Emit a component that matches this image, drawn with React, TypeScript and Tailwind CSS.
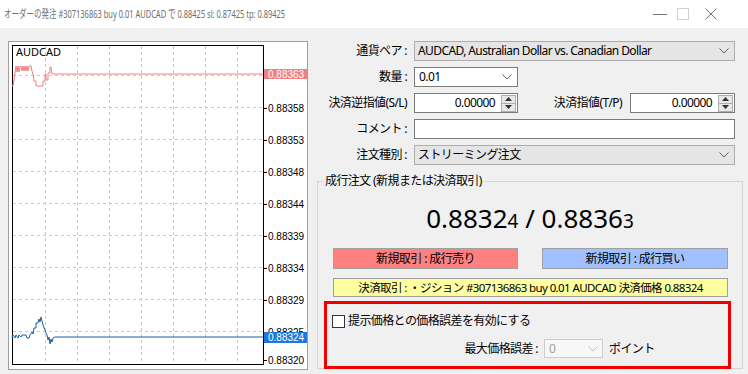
import React from 'react'

const FONT = { fontFamily: '"Noto Sans", "Noto Sans CJK JP", sans-serif' }

function Chevron({ color = '#606060' }: { color?: string }) {
  return (
    <svg width="10" height="6" viewBox="0 0 10 6">
      <polyline points="0.5,0.5 5,5 9.5,0.5" fill="none" stroke={color} strokeWidth="1" />
    </svg>
  )
}

function Spin() {
  return (
    <div className="flex flex-col w-[15px] h-[17px] border border-[#adadad] bg-[#e8e8e8] mr-[1px]">
      <div className="flex-1 flex items-center justify-center border-b border-[#adadad]">
        <svg width="7" height="4" viewBox="0 0 7 4"><polygon points="0,4 3.5,0 7,4" fill="#333" /></svg>
      </div>
      <div className="flex-1 flex items-center justify-center">
        <svg width="7" height="4" viewBox="0 0 7 4"><polygon points="0,0 3.5,4 7,0" fill="#333" /></svg>
      </div>
    </div>
  )
}

function Chart() {
  const vx = [36, 68, 100, 132, 164, 196, 228]
  const hy = [33, 65, 97, 129, 161, 193, 225, 257, 289]
  const ticks: [number, string][] = [
    [66, '0.88358'],
    [98, '0.88353'],
    [130, '0.88348'],
    [162, '0.88344'],
    [194, '0.88339'],
    [226, '0.88334'],
    [258, '0.88329'],
    [290, '0.88325'],
    [318, '0.88320'],
  ]
  const red =
    '3,44 4,44 5,38 6,31 7,24 8,30 9,24 10,30 11,24 12,24 13,29 14,24 15,29 16,24 17,29 18,24 19,29 20,24 22,24 23,29 24,32 25,39 27,39 27,44 34,44 34,39 36,39 36,32 37,32 37,38 39,38 39,31 41,31 41,25 42,25 43,32 254,32'
  const blue =
    '3,296 4,293 6,296 7,293 9,296 10,293 12,295 13,293 15,293 17,293 18,296 20,296 21,293 23,290 24,292 25,286 27,286 27,281 29,281 30,277 31,280 32,275 33,279 34,283 36,288 37,291 38,293 39,298 40,295 41,302 42,297 43,300 44,296 46,295 254,295'
  return (
    <svg width="298" height="327" viewBox="0 0 298 327" className="block">
      {vx.map((x) => (
        <line key={x} x1={x + 0.5} y1={4} x2={x + 0.5} y2={322} stroke="#c8c8c8" strokeDasharray="3,3" />
      ))}
      {hy.map((y) => (
        <line key={y} x1={4} y1={y + 0.5} x2={254} y2={y + 0.5} stroke="#c8c8c8" strokeDasharray="3,3" />
      ))}
      <rect x="3.5" y="3.5" width="251" height="319" fill="none" stroke="#000" />
      <polyline points={red} fill="none" stroke="#f08080" strokeWidth="1" />
      <polyline points={blue} fill="none" stroke="#1c5fa0" strokeWidth="1" />
      {ticks.map(([y, t]) => (
        <g key={t}>
          <line x1="255" y1={y + 0.5} x2="258" y2={y + 0.5} stroke="#000" />
          <text x="259" y={y + 3.5} fontSize="10" fontFamily='"Liberation Sans", sans-serif' fill="#000">
            {t}
          </text>
        </g>
      ))}
      <rect x="255" y="27" width="45" height="10" fill="#f08080" />
      <text x="259" y="35.5" fontSize="10" fontFamily='"Liberation Sans", sans-serif' fill="#fff">
        0.88363
      </text>
      <rect x="255" y="290" width="45" height="11" fill="#1e78dc" />
      <text x="259" y="299" fontSize="10" fontFamily='"Liberation Sans", sans-serif' fill="#fff">
        0.88324
      </text>
      <text x="7" y="14" fontSize="11" fontFamily='"Noto Sans", sans-serif' fill="#000">
        AUDCAD
      </text>
    </svg>
  )
}

function Label({ children }: { children: React.ReactNode }) {
  return <div className="w-[90px] text-right whitespace-nowrap">{children}</div>
}

export default function App() {
  return (
    <div style={FONT} className="w-[748px] h-[374px] bg-[#f0f0f0] flex flex-col text-[12px] tracking-[-0.6px] text-black overflow-hidden">
      {/* title bar */}
      <div className="h-[28px] bg-white flex items-center shrink-0">
        <div className="pl-[6px] w-[440px] text-[11px] tracking-normal text-[#6e6e6e] whitespace-nowrap origin-left scale-x-[0.68]">
          オーダーの発注 #307136863 buy 0.01 AUDCAD で 0.88425 sl: 0.87425 tp: 0.89425
        </div>
        <div className="ml-auto mr-[31px] flex items-center h-full">
          <svg width="14" height="1"><rect width="14" height="1" fill="#777" /></svg>
          <svg width="12" height="12" className="ml-[10px]">
            <rect x="0.5" y="0.5" width="11" height="11" fill="none" stroke="#d0d0d0" />
          </svg>
          <svg width="12" height="12" className="ml-[16px]">
            <path d="M0.5,0.5 L11.5,11.5 M11.5,0.5 L0.5,11.5" stroke="#777" strokeWidth="1" />
          </svg>
        </div>
      </div>

      <div className="flex flex-1">
        {/* chart */}
        <div className="ml-[8px] mt-[13px] w-[300px] h-[329px] border border-[#a0a0a0] bg-white tracking-normal">
          <Chart />
        </div>

        {/* form */}
        <div className="flex-1 pl-[9px] pr-[5px] pt-[13px] flex flex-col">
          <div className="flex flex-col gap-[6px]">
            <div className="flex items-center h-[20px]">
              <Label>通貨ペア :</Label>
              <div className="ml-[7px] mr-[8px] flex-1 h-[20px] bg-[#e5e5e5] border border-[#adadad] flex items-center pl-[3px] pr-[5px]">
                <span className="flex-1">AUDCAD, Australian Dollar vs. Canadian Dollar</span>
                <Chevron />
              </div>
            </div>
            <div className="flex items-center h-[20px]">
              <Label>数量 :</Label>
              <div className="ml-[7px] w-[104px] h-[20px] bg-white border border-[#7a7a7a] flex items-center pl-[4px] pr-[5px]">
                <span className="flex-1">0.01</span>
                <Chevron />
              </div>
            </div>
            <div className="flex items-center h-[20px]">
              <Label>決済逆指値(S/L)</Label>
              <div className="ml-[7px] w-[104px] h-[20px] bg-white border border-[#7a7a7a] flex items-center">
                <span className="flex-1 text-right pr-[6px]">0.00000</span>
                <Spin />
              </div>
              <div className="flex-1 text-right pr-[8px] whitespace-nowrap">決済指値(T/P)</div>
              <div className="mr-[8px] w-[105px] h-[20px] bg-white border border-[#7a7a7a] flex items-center">
                <span className="flex-1 text-right pr-[6px]">0.00000</span>
                <Spin />
              </div>
            </div>
            <div className="flex items-center h-[20px]">
              <Label>コメント :</Label>
              <div className="ml-[7px] mr-[8px] flex-1 h-[20px] bg-white border border-[#7a7a7a]" />
            </div>
            <div className="flex items-center h-[20px]">
              <Label>注文種別 :</Label>
              <div className="ml-[7px] mr-[8px] flex-1 h-[20px] bg-[#e5e5e5] border border-[#adadad] flex items-center pl-[3px] pr-[5px]">
                <span className="flex-1">ストリーミング注文</span>
                <Chevron />
              </div>
            </div>
          </div>

          <fieldset className="mt-[8px] h-[196px] border border-[#d5d5d5] flex flex-col">
            <legend className="ml-[5px] px-[2px] leading-[16px]">成行注文 (新規または決済取引)</legend>
            <div className="mt-[14px] h-[30px] leading-[30px] text-center text-[26px] tracking-normal">
              0.8832<span className="text-[19px]">4</span> / 0.8836<span className="text-[19px]">3</span>
            </div>
            <div className="mt-[15px] flex ml-[15px]">
              <div className="w-[185px] h-[21px] bg-[#ff8080] border border-[#a0a0a0] flex items-center justify-center">
                新規取引 : 成行売り
              </div>
              <div className="ml-[24px] w-[186px] h-[21px] bg-[#a0c0ff] border border-[#a0a0a0] flex items-center justify-center">
                新規取引 : 成行買い
              </div>
            </div>
            <div className="mt-[9px] ml-[15px] w-[395px] h-[19px] bg-[#ffffa0] border border-[#a0a0a0] flex items-center justify-center text-[11.5px] whitespace-nowrap">
              決済取引 : ・ジション #307136863 buy 0.01 AUDCAD 決済価格 0.88324
            </div>
            <div className="mt-[4px] ml-[6px] w-[407px] h-[68px] border-[3px] border-[#ee0000] flex flex-col">
              <div className="mt-[10px] ml-[5px] flex items-center h-[14px]">
                <div className="w-[13px] h-[13px] border border-[#333] bg-white" />
                <span className="ml-[3px]">提示価格との価格誤差を有効にする</span>
              </div>
              <div className="mt-[11px] flex items-center h-[19px]">
                <div className="w-[211px] text-right">最大価格誤差 :</div>
                <div className="ml-[6px] w-[59px] h-[19px] bg-[#f7f7f7] border border-[#cccccc] flex items-center pl-[4px] pr-[4px]">
                  <span className="flex-1 text-[#a0a0a0]">0</span>
                  <Chevron color="#c0c0c0" />
                </div>
                <span className="ml-[6px]">ポイント</span>
              </div>
            </div>
          </fieldset>
        </div>
      </div>
    </div>
  )
}
